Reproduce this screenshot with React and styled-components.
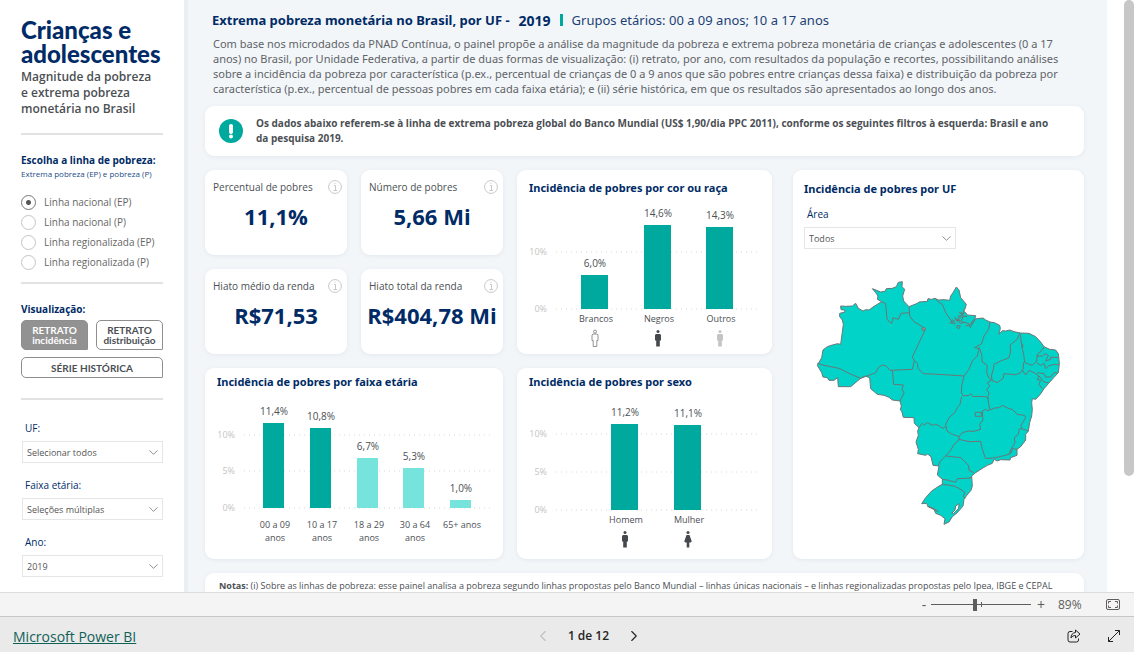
import styled, { createGlobalStyle } from 'styled-components'
import { ChevronDown, ChevronLeft, ChevronRight } from 'lucide-react'

const colors = {
  navy: '#002b66',
  teal: '#00a99d',
  tealLight: '#76e4dc',
  map: '#01d3c8',
  border: '#6b7777',
  text: '#4b4f54',
  muted: '#c4c4c4',
  page: '#f2f6f9',
}

const GlobalStyle = createGlobalStyle`
  * { box-sizing: border-box; }
  body {
    margin: 0;
    background: #fff;
    color: ${colors.text};
    font-family: "Open Sans", "Noto Sans", sans-serif;
  }
  h1, h2, h3, p, fieldset { margin: 0; padding: 0; border: 0; }
  button, input, select { font-family: inherit; margin: 0; }
`

const Viewer = styled.div`
  display: flex;
  flex-direction: column;
  height: 100vh;
`

const Report = styled.div`
  display: flex;
  flex: 1;
  min-height: 0;
  overflow: hidden;
`

/* sidebar */

const Sidebar = styled.aside`
  flex: none;
  width: 184px;
  padding: 18px 21px 0;
  background: #fff;
`

const Brand = styled.h1`
  font-family: Lato, sans-serif;
  font-size: 24px;
  line-height: 24px;
  font-weight: 900;
  color: ${colors.navy};
  white-space: nowrap;
`

const Tagline = styled.p`
  margin-top: 3px;
  font-size: 12px;
  line-height: 16px;
  font-weight: 600;
  white-space: nowrap;
`

const Divider = styled.hr`
  height: 2px;
  margin: ${p => p.$top || 16}px 0 ${p => p.$bottom || 17}px;
  border: 0;
  background: #e2e2e2;
`

const Group = styled.fieldset`
  min-width: 0;
`

const GroupTitle = styled.legend`
  padding: 0;
  font-size: 10px;
  line-height: 16px;
  font-weight: 700;
  color: ${colors.navy};
  white-space: nowrap;
`

const GroupHint = styled.p`
  font-size: 8px;
  line-height: 12px;
  color: #1d4b85;
  white-space: nowrap;
`

const Options = styled.div`
  padding-top: 12px;
`

const Option = styled.label`
  display: flex;
  align-items: center;
  gap: 8px;
  height: 20px;
  font-size: 10px;
  color: #666;
  white-space: nowrap;
`

const Radio = styled.input`
  appearance: none;
  width: 15px;
  height: 15px;
  border: 1px solid #c4c4c4;
  border-radius: 50%;
  background: #fff;
  &:checked {
    border-color: #777;
    background: radial-gradient(circle, #555 2px, #fff 3px);
  }
`

const Views = styled.div`
  display: grid;
  grid-template-columns: 1fr 1fr;
  gap: 7px 8px;
  margin-top: 3px;
`

const ViewButton = styled.button`
  grid-column: ${p => (p.$wide ? 'span 2' : 'auto')};
  height: ${p => (p.$wide ? 21 : 30)}px;
  padding: 0;
  border: 1px solid #8e8e8e;
  border-radius: 5px 5px 1px 5px;
  background: ${p => (p.$active ? '#929292' : '#fff')};
  color: ${p => (p.$active ? '#fff' : colors.text)};
  font-family: Lato, sans-serif;
  font-size: 10px;
  line-height: 10px;
  font-weight: 700;
`

const Slicer = styled.label`
  display: block;
  margin-bottom: 12px;
  padding-top: ${p => p.$top || 0}px;
  padding-left: 1px;
  font-size: 10px;
  line-height: 20px;
  color: ${colors.navy};
`

const SlicerName = styled.span`
  display: block;
  padding-left: 3px;
  margin-bottom: 3px;
`

const SelectBox = styled.span`
  display: grid;
  grid-template-columns: 1fr 20px;
  align-items: center;
  width: ${p => (p.$width ? p.$width + 'px' : '100%')};
  svg {
    grid-area: 1 / 2;
    justify-self: center;
    color: #888;
    pointer-events: none;
  }
`

const Select = styled.select`
  grid-area: 1 / 1 / 2 / 3;
  appearance: none;
  height: 22px;
  padding: 0 4px;
  border: 1px solid #e6e6e6;
  border-radius: 0;
  background: #fff;
  color: #555;
  font-size: 9px;
`

/* content */

const Content = styled.main`
  flex: 1;
  min-width: 0;
  padding: 10px 23px 0 21px;
  background: ${colors.page};
  box-shadow: inset 4px 0 0 #e9eef2;
`

const Heading = styled.header`
  display: flex;
  align-items: center;
  gap: 9px;
  height: 20px;
  padding-left: 7px;
  font-family: "Noto Sans", sans-serif;
  white-space: nowrap;
`

const HeadingTitle = styled.h2`
  display: flex;
  align-items: center;
  gap: 9px;
  font-size: 13px;
  font-weight: 700;
  color: ${colors.navy};
`

const HeadingYear = styled.span`
  font-size: 14px;
`

const HeadingMark = styled.span`
  width: 3px;
  height: 12px;
  background: ${colors.teal};
`

const HeadingGroups = styled.span`
  font-size: 13px;
  color: #1d3f75;
`

const Intro = styled.p`
  margin: 6px 0 10px;
  padding-left: 8px;
  font-family: "Noto Sans", sans-serif;
  font-size: 11px;
  line-height: 15px;
  color: #5f6368;
  white-space: nowrap;
`

const Line = styled.span`
  display: block;
`

const Card = styled.section`
  min-width: 0;
  border-radius: 9px;
  background: #fff;
  box-shadow: 0 1px 4px rgba(60, 80, 100, 0.08);
`

const Notice = styled(Card)`
  display: flex;
  align-items: center;
  gap: 13px;
  height: 50px;
  padding: 0 14px;
  font-size: 10px;
  line-height: 15px;
  font-weight: 700;
  white-space: nowrap;
  svg { flex: none; }
`

const Dashboard = styled.div`
  display: grid;
  grid-template-columns: 567fr 291fr;
  gap: 21px;
  margin: 14px 0;
`

const Panels = styled.div`
  display: grid;
  grid-template-columns: 142fr 142fr 255fr;
  grid-template-rows: 85px 85px 191px;
  gap: 14px;
`

const KpiCard = styled(Card)`
  padding: 7px 5px 0 8px;
`

const KpiHeader = styled.div`
  display: flex;
  align-items: center;
  justify-content: space-between;
  height: 20px;
  font-size: 10px;
  white-space: nowrap;
`

const KpiValue = styled.p`
  margin-left: -3px;
  font-size: 22px;
  line-height: 38px;
  font-weight: 700;
  text-align: center;
  white-space: nowrap;
  color: ${colors.navy};
`

const ChartCard = styled(Card)`
  grid-column: ${p => p.$column};
  grid-row: ${p => p.$row};
  padding: ${p => p.$pad || 4}px 0 0 11px;
`

const CardTitle = styled.h3`
  padding-left: 1px;
  font-family: "Noto Sans", sans-serif;
  font-size: 11px;
  line-height: 20px;
  font-weight: 700;
  color: ${colors.navy};
  white-space: nowrap;
`

const ChartSvg = styled.svg`
  display: block;
  width: 100%;
  font-family: "Open Sans", "Noto Sans", sans-serif;
`

const MapCard = styled(Card)`
  padding: 9px 10px 0;
`

const MapSvg = styled.svg`
  display: block;
  width: 260px;
  margin: 27px auto 0;
`

const Notes = styled(Card)`
  padding: 5px 14px 20px;
  font-size: 9px;
  line-height: 16px;
  white-space: nowrap;
`

const ScrollRail = styled.div`
  flex: none;
  width: 27px;
  padding-left: 17px;
`

const ScrollThumb = styled.div`
  height: 476px;
  border-radius: 5px;
  background: #c7c7c7;
`

/* bottom bars */

const ZoomBar = styled.div`
  display: flex;
  align-items: center;
  justify-content: flex-end;
  height: 24px;
  padding-right: 14px;
  border-top: 1px solid #dcdcdc;
  background: #f4f4f4;
  color: #605e5c;
`

const PlainButton = styled.button`
  display: flex;
  align-items: center;
  justify-content: center;
  width: ${p => p.$width || 20}px;
  padding: 0;
  border: 0;
  background: none;
  color: inherit;
  font-size: 14px;
  line-height: 20px;
`

const ZoomRange = styled.input`
  appearance: none;
  width: 100px;
  height: 13px;
  background:
    linear-gradient(#605e5c, #605e5c) 50px 4px / 1px 5px no-repeat,
    linear-gradient(#605e5c, #605e5c) 0 6px / 100% 1px no-repeat;
  &::-webkit-slider-thumb {
    appearance: none;
    width: 4px;
    height: 12px;
    background: #605e5c;
  }
`

const ZoomValue = styled.span`
  width: 24px;
  margin: 0 24px 0 7px;
  font-size: 12px;
`

const Footer = styled.footer`
  display: grid;
  grid-template-columns: 1fr auto 1fr;
  align-items: center;
  height: 36px;
  padding: 2px 10px 0 13px;
  border-top: 1px solid #c6c6c6;
  background: #eaeaea;
  color: #252423;
`

const FooterLink = styled.a`
  font-size: 14px;
  line-height: 20px;
  color: #0f6158;
`

const Pager = styled.nav`
  display: flex;
  align-items: center;
  gap: 15px;
  padding-left: 40px;
  font-size: 12px;
  font-weight: 600;
`

const FooterActions = styled.div`
  display: flex;
  justify-content: flex-end;
  gap: 20px;
`

const introLines = [
  'Com base nos microdados da PNAD Contínua, o painel propõe a análise da magnitude da pobreza e extrema pobreza monetária de crianças e adolescentes (0 a 17',
  'anos) no Brasil, por Unidade Federativa, a partir de duas formas de visualização: (i) retrato, por ano, com resultados da população e recortes, possibilitando análises',
  'sobre a incidência da pobreza por característica (p.ex., percentual de crianças de 0 a 9 anos que são pobres entre crianças dessa faixa) e distribuição da pobreza por',
  'característica (p.ex., percentual de pessoas pobres em cada faixa etária); e (ii) série histórica, em que os resultados são apresentados ao longo dos anos.',
]

const povertyLines = [
  'Linha nacional (EP)',
  'Linha nacional (P)',
  'Linha regionalizada (EP)',
  'Linha regionalizada (P)',
]

const slicers = [
  { name: 'UF:', value: 'Selecionar todos' },
  { name: 'Faixa etária:', value: 'Seleções múltiplas' },
  { name: 'Ano:', value: '2019' },
]

const kpis = [
  { label: 'Percentual de pobres', value: '11,1%' },
  { label: 'Número de pobres', value: '5,66 Mi' },
  { label: 'Hiato médio da renda', value: 'R$71,53' },
  { label: 'Hiato total da renda', value: 'R$404,78 Mi' },
]

const raceChart = {
  width: 244, height: 156, left: 28, right: 232, barWidth: 27,
  ticks: [{ label: '10%', y: 54 }, { label: '0%', y: 111 }],
  bars: [
    { label: ['Brancos'], value: '6,0%', x: 66, top: 77, person: 'outline' },
    { label: ['Negros'], value: '14,6%', x: 129, top: 27, person: 'dark' },
    { label: ['Outros'], value: '14,3%', x: 191, top: 29, person: 'light' },
  ],
}

const ageChart = {
  width: 287, height: 167, left: 28, right: 275, barWidth: 21,
  ticks: [{ label: '10%', y: 43 }, { label: '5%', y: 79 }, { label: '0%', y: 116 }],
  labelGap: 7,
  bars: [
    { label: ['00 a 09', 'anos'], value: '11,4%', x: 57, top: 31 },
    { label: ['10 a 17', 'anos'], value: '10,8%', x: 104, top: 36 },
    { label: ['18 a 29', 'anos'], value: '6,7%', x: 151, top: 66, light: true },
    { label: ['30 a 64', 'anos'], value: '5,3%', x: 197, top: 76, light: true },
    { label: ['65+ anos'], value: '1,0%', x: 244, top: 108, light: true },
  ],
}

const sexChart = {
  width: 244, height: 167, left: 28, right: 232, barWidth: 27,
  ticks: [{ label: '10%', y: 42 }, { label: '5%', y: 80 }, { label: '0%', y: 118 }],
  bars: [
    { label: ['Homem'], value: '11,2%', x: 96, top: 32, person: 'dark' },
    { label: ['Mulher'], value: '11,1%', x: 159, top: 33, person: 'woman' },
  ],
}

const personFill = { outline: '#fff', dark: '#45494e', light: '#c4c4c4', woman: '#45494e' }

function Person({ kind, x, y }) {
  const stroke = kind === 'outline' ? '#777' : 'none'
  return (
    <g transform={`translate(${x} ${y})`} fill={personFill[kind]} stroke={stroke} strokeWidth="0.8">
      <circle cx="0" cy="1.6" r="1.5" />
      {kind === 'woman'
        ? <path d="M-1.5 4h3L3.800 10.500 2.500 11.500H1.300V16.500h-2.600V11.500H-2.500L-3.800 10.500z" />
        : <path d="M-2 4h4l1 1v5.500H1.800V16.500h-3.600V10.500H-3V5z" />}
    </g>
  )
}

function BarChart({ chart, title }) {
  const base = chart.ticks[chart.ticks.length - 1].y
  const labelY = base + 13 + (chart.labelGap || 0)
  return (
    <ChartSvg viewBox={`0 0 ${chart.width} ${chart.height}`} role="img" aria-label={title}>
      {chart.ticks.map(tick => (
        <g key={tick.label}>
          <text x="19" y={tick.y + 3} textAnchor="end" fontSize="9" fill={colors.muted}>{tick.label}</text>
          <line x1={chart.left} x2={chart.right} y1={tick.y} y2={tick.y} stroke="#d8d8d8" strokeDasharray="1 4" />
        </g>
      ))}
      {chart.bars.map(bar => (
        <g key={bar.value} textAnchor="middle" fill={colors.text}>
          <rect
            x={bar.x - Math.floor(chart.barWidth / 2)} y={bar.top}
            width={chart.barWidth} height={base - bar.top}
            fill={bar.light ? colors.tealLight : colors.teal}
          />
          <text x={bar.x + 1} y={bar.top - 8} fontSize="10">{bar.value}</text>
          {bar.label.map((line, i) => (
            <text key={line} x={bar.x + 2} y={labelY + i * 13} fontSize="9">{line}</text>
          ))}
          {bar.person && <Person kind={bar.person} x={bar.x + 1} y={base + 21} />}
        </g>
      ))}
    </ChartSvg>
  )
}

const brazil = 'M95 90L110 91 130 90 140 82 148 97 162 105 170 101 180 102 192 93 205 85 218 77 205 70 207 60 200 50 190 38 203 43 215 48 228 46 232 38 250 37 262 32 268 19 280 17 279 32 287 40 281 60 284 75 300 92 325 82 330 78 355 76 357 68 368 70 378 67 388 72 405 71 422 73 425 60 432 50 442 33 450 42 455 65 472 85 468 98 462 104 470 110 475 117 500 119 496 135 486 145 490 135 500 128 505 128 522 126 530 132 543 138 556 140 572 148 574 157 570 175 580 164 590 165 602 162 615 167 635 171 660 172 680 182 695 198 705 212 722 220 740 222 748 233 750 250 751 265 748 290 735 304 718 323 705 338 693 356 680 370 670 368 668 380 670 400 668 420 662 440 658 465 650 475 650 492 635 512 624 520 624 538 605 545 603 552 575 551 565 555 555 550 550 562 535 568 520 577 500 590 488 600 490 630 486 643 474 657 465 670 462 690 445 710 430 722 420 738 405 745 408 728 395 718 380 712 375 700 355 690 388 707 372 696 360 694 352 682 338 683 350 665 368 645 390 630 400 625 400 610 385 597 390 570 372 568 366 542 356 534 350 538 326 533 328 520 321 498 328 478 326 465 330 455 316 442 315 425 283 424 278 405 274 402 277 390 273 375 250 372 240 364 225 358 205 355 185 338 182 305 168 300 155 307 125 332 88 332 86 305 75 313 60 313 55 305 42 303 38 290 25 268 38 245 42 222 55 212 70 207 86 203 95 205 103 145 100 132 92 122 92 112 108 108 107 102 96 101z'

const westBorders = [
  'M25 262L45 268 90 277 120 292 155 307 182 297 200 290 208 275 220 267 232 270 243 283 310 280',
  'M218 77L230 83 234 130 248 143 252 125 268 130 276 112 300 110',
  'M300 92L302 120 315 137 348 157M348 162L310 243 316 253 310 280',
  'M316 253L325 262 327 277 343 293 390 295 465 300',
  'M250 283L254 325 283 327 279 340 285 350 273 375',
  'M330 455L340 442 346 447 355 440 370 448 380 445 392 450 400 457 410 453',
]

/* these start 360 units to the east */
const eastBorders = [
  'M20 68L28 78 40 85 50 110 60 125 70 138 78 130 85 135 90 122 100 115 108 98M95 108L103 118 98 133M82 130L100 137 120 143 124 155 130 143 135 137M85 148L94 150 90 158 83 154zM62 142L75 136 80 142',
  'M90 108l10 8 6-6M86 118l10 6 8-4 10 2M76 124l8 4M92 128l-4 8 6 6 12-2M110 148l8 2 6-6M70 130l-4 10 12 4',
  'M183 138L179 160 165 180 158 203 137 215 150 218 145 240 130 255 120 280 105 300 98 330 97 350 103 360 120 358 125 353 132 362 150 361 170 362 180 368',
  'M150 213L158 235 160 258 175 268 173 290 180 306 188 312 175 320 182 330 173 340 180 350 176 365 182 400',
  'M98 362L93 385 85 395 77 410 60 425 50 445 54 465 70 475 90 482 100 470 118 465 135 466 155 460 152 445 162 432 160 405 170 400 177 405 182 400',
  'M90 482L90 492 75 505 65 523 50 540 33 556 28 570M90 490L120 497 155 496 160 520 167 540 170 548 200 545 240 535 246 520 258 500 256 485 268 475 270 460 280 455 275 450 290 425 286 418 265 415 250 400 240 398 220 388 210 395 197 396 182 402',
  'M250 518L265 520M250 518L247 530 240 535M275 458L290 462 298 465M50 540L95 545 107 556 118 568 120 583 135 590',
  'M40 610L55 612 80 619 85 608 110 607 128 605M40 625L75 630 90 637 108 650 103 660 108 668',
  'M272 172L265 190 243 207 245 225 240 245 215 255 195 265 193 280 187 300 190 314 205 320 223 306 225 293 260 296 275 290 282 280 284 260 287 258 284 235 280 217 277 200 274 175M276 200L283 210 277 216',
  'M345 212L337 225 325 235 323 255 310 268 287 260M323 240L340 240 348 233 358 238 350 255 365 250 365 243 388 245M323 260L335 268 345 262 350 278 358 270 375 265 390 266',
  'M280 282L290 297 300 283 315 290 330 300 325 310 335 313 330 325 340 338M325 290L345 293 350 303 365 303 375 290 385 290M330 300L345 318 358 320',
  'M139 409h18v12h-18z',
]

function BrazilMap() {
  return (
    <MapSvg viewBox="0 0 780 765" role="img" aria-label="Mapa do Brasil por UF">
      <g fill={colors.map} stroke={colors.border} strokeWidth="3" strokeLinejoin="round">
        <path d={brazil} />
        {westBorders.map(d => <path key={d} d={d} fill="none" />)}
        <path d="M338 158l8-4 4 6-8 4z" fill="#999" />
        <g transform="translate(360 0)">
          {eastBorders.map(d => <path key={d} d={d} fill="none" />)}
          <path d="M68 712l10-10 2-12 11-7-3 15-14 14z" fill="#fff" />
        </g>
      </g>
    </MapSvg>
  )
}

function InfoIcon() {
  return (
    <svg width="14" height="14" viewBox="0 0 14 14" fill="none" stroke="#c8c8c8" aria-hidden="true">
      <circle cx="7" cy="7" r="6.400" />
      <path d="M6 5.500h1.500v5M5.500 10.500h3.500M6.500 3.400h1" />
    </svg>
  )
}

function Dropdown({ value, label, width }) {
  return (
    <SelectBox $width={width}>
      <Select aria-label={label} defaultValue={value}>
        <option>{value}</option>
      </Select>
      <ChevronDown size={15} strokeWidth={1.500} />
    </SelectBox>
  )
}

export default function App() {
  return (
    <Viewer>
      <GlobalStyle />
      <Report>
        <Sidebar>
          <Brand>Crianças e<br />adolescentes</Brand>
          <Tagline>Magnitude da pobreza<br />e extrema pobreza<br />monetária no Brasil</Tagline>
          <Divider />
          <Group>
            <GroupTitle>Escolha a linha de pobreza:</GroupTitle>
            <GroupHint>Extrema pobreza (EP) e pobreza (P)</GroupHint>
            <Options>
              {povertyLines.map((line, i) => (
                <Option key={line}>
                  <Radio type="radio" name="linha" defaultChecked={i === 0} />
                  {line}
                </Option>
              ))}
            </Options>
          </Group>
          <Divider $top={10} />
          <Group>
            <GroupTitle>Visualização:</GroupTitle>
            <Views>
              <ViewButton $active>RETRATO<br />incidência</ViewButton>
              <ViewButton>RETRATO<br />distribuição</ViewButton>
              <ViewButton $wide>SÉRIE HISTÓRICA</ViewButton>
            </Views>
          </Group>
          <Divider $top={20} $bottom={18} />
          {slicers.map(slicer => (
            <Slicer key={slicer.name}>
              <SlicerName>{slicer.name}</SlicerName>
              <Dropdown value={slicer.value} label={slicer.name} />
            </Slicer>
          ))}
        </Sidebar>

        <Content>
          <Heading>
            <HeadingTitle>
              <span>Extrema pobreza monetária no Brasil, por UF -</span>
              <HeadingYear>2019</HeadingYear>
            </HeadingTitle>
            <HeadingMark />
            <HeadingGroups>Grupos etários: 00 a 09 anos; 10 a 17 anos</HeadingGroups>
          </Heading>
          <Intro>
            {introLines.map(line => <Line key={line}>{line}</Line>)}
          </Intro>
          <Notice>
            <svg width="24" height="24" viewBox="0 0 24 24" aria-hidden="true">
              <circle cx="12" cy="12" r="12" fill={colors.teal} />
              <path d="M12 7v6" stroke="#fff" strokeWidth="4" strokeLinecap="round" />
              <circle cx="12" cy="17.500" r="2" fill="#fff" />
            </svg>
            <p>
              <Line>Os dados abaixo referem-se à linha de extrema pobreza global do Banco Mundial (US$ 1,90/dia PPC 2011), conforme os seguintes filtros à esquerda: Brasil e ano</Line>
              <Line>da pesquisa 2019.</Line>
            </p>
          </Notice>

          <Dashboard>
            <Panels>
              {kpis.map(kpi => (
                <KpiCard key={kpi.label}>
                  <KpiHeader>{kpi.label}<InfoIcon /></KpiHeader>
                  <KpiValue>{kpi.value}</KpiValue>
                </KpiCard>
              ))}
              <ChartCard $column="3" $row="1 / span 2" $pad={8}>
                <CardTitle>Incidência de pobres por cor ou raça</CardTitle>
                <BarChart chart={raceChart} title="Incidência de pobres por cor ou raça" />
              </ChartCard>
              <ChartCard $column="1 / span 2" $row="3">
                <CardTitle>Incidência de pobres por faixa etária</CardTitle>
                <BarChart chart={ageChart} title="Incidência de pobres por faixa etária" />
              </ChartCard>
              <ChartCard $column="3" $row="3">
                <CardTitle>Incidência de pobres por sexo</CardTitle>
                <BarChart chart={sexChart} title="Incidência de pobres por sexo" />
              </ChartCard>
            </Panels>
            <MapCard>
              <CardTitle>Incidência de pobres por UF</CardTitle>
              <Slicer $top={5}>
                <SlicerName>Área</SlicerName>
                <Dropdown value="Todos" label="Área" width={152} />
              </Slicer>
              <BrazilMap />
            </MapCard>
          </Dashboard>

          <Notes>
            <b>Notas:</b> (i) Sobre as linhas de pobreza: esse painel analisa a pobreza segundo linhas propostas pelo Banco Mundial – linhas únicas nacionais – e linhas regionalizadas propostas pelo Ipea, IBGE e CEPAL
          </Notes>
        </Content>
        <ScrollRail><ScrollThumb /></ScrollRail>
      </Report>

      <ZoomBar>
        <PlainButton $width={14} aria-label="Diminuir zoom">-</PlainButton>
        <ZoomRange type="range" min="0" max="100" defaultValue="44" aria-label="Zoom" />
        <PlainButton aria-label="Aumentar zoom">+</PlainButton>
        <ZoomValue>89%</ZoomValue>
        <PlainButton $width={14} aria-label="Ajustar à página">
          <svg width="14" height="11" viewBox="0 0 14 11" fill="none" stroke="currentColor">
            <rect x="0.500" y="0.500" width="13" height="10" rx="1.500" />
            <path d="M5 2.500H2.500V4.500M2.500 6.500V8.500H5M9 2.500h2.500V4.500M11.500 6.500V8.500H9" />
          </svg>
        </PlainButton>
      </ZoomBar>
      <Footer>
        <div><FooterLink href="#">Microsoft Power BI</FooterLink></div>
        <Pager>
          <PlainButton aria-label="Página anterior" disabled><ChevronLeft size={18} strokeWidth={1.500} color="#c0c0c0" /></PlainButton>
          <span>1 de 12</span>
          <PlainButton aria-label="Próxima página"><ChevronRight size={18} strokeWidth={1.500} /></PlainButton>
        </Pager>
        <FooterActions>
          <PlainButton aria-label="Compartilhar">
            <svg width="14" height="14" viewBox="0 0 14 14" fill="none" stroke="currentColor" strokeLinejoin="round">
              <path d="M5.500 2.500H3a2 2 0 0 0-2 2V11a2 2 0 0 0 2 2h6.500a2 2 0 0 0 2-2V9.500" />
              <path d="M8.500 1l4.500 4-4.500 4V6.500C6.500 6.500 5 7.300 4 9c0-3 1.500-5.300 4.500-5.500z" />
            </svg>
          </PlainButton>
          <PlainButton aria-label="Tela cheia">
            <svg width="14" height="14" viewBox="0 0 14 14" fill="none" stroke="currentColor">
              <path d="M1.500 12.500l11-11M8 1.500h4.500V6M1.500 8v4.500H6" />
            </svg>
          </PlainButton>
        </FooterActions>
      </Footer>
    </Viewer>
  )
}
